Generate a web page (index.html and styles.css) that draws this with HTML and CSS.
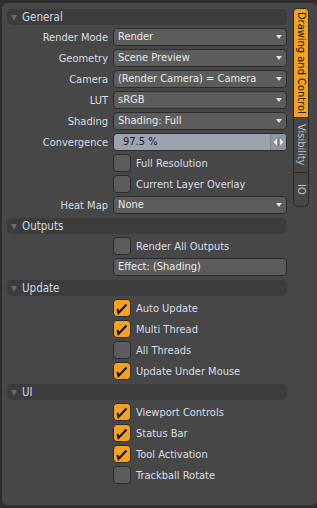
FILE: index.html
```html
<!DOCTYPE html>
<html lang="en">
<head>
  <meta charset="UTF-8">
  <title>Render Properties</title>
  <link rel="stylesheet" href="styles.css">
</head>
<body>
<div class="panel">
  <div class="form">
    <div class="head"><span class="tri"></span>General</div>
    <div class="row"><span class="label">Render Mode</span><div class="drop">Render</div></div>
    <div class="row"><span class="label">Geometry</span><div class="drop">Scene Preview</div></div>
    <div class="row"><span class="label">Camera</span><div class="drop">(Render Camera) = Camera</div></div>
    <div class="row"><span class="label">LUT</span><div class="drop">sRGB</div></div>
    <div class="row"><span class="label">Shading</span><div class="drop">Shading: Full</div></div>
    <div class="row"><span class="label">Convergence</span><div class="slider"><span class="val">97.5 %</span><span class="grip"><svg viewBox="0 0 15 16"><path d="M6 4.5 L2.5 8 L6 11.5 Z M9 4.5 L12.5 8 L9 11.5 Z"/><line x1="7.5" y1="3.5" x2="7.5" y2="12.5"/></svg></span></div></div>
    <div class="row"><span></span><div class="check"><span class="box"></span>Full Resolution</div></div>
    <div class="row"><span></span><div class="check"><span class="box"></span>Current Layer Overlay</div></div>
    <div class="row"><span class="label">Heat Map</span><div class="drop">None</div></div>

    <div class="head"><span class="tri"></span>Outputs</div>
    <div class="row"><span></span><div class="check"><span class="box"></span>Render All Outputs</div></div>
    <div class="row"><span></span><div class="field">Effect: (Shading)</div></div>

    <div class="head"><span class="tri"></span>Update</div>
    <div class="row"><span></span><div class="check"><span class="box on"><svg viewBox="0 0 16 16"><polyline points="3.5,9 4.5,13 12.5,4.5"/></svg></span>Auto Update</div></div>
    <div class="row"><span></span><div class="check"><span class="box on"><svg viewBox="0 0 16 16"><polyline points="3.5,9 4.5,13 12.5,4.5"/></svg></span>Multi Thread</div></div>
    <div class="row"><span></span><div class="check"><span class="box"></span>All Threads</div></div>
    <div class="row"><span></span><div class="check"><span class="box on"><svg viewBox="0 0 16 16"><polyline points="3.5,9 4.5,13 12.5,4.5"/></svg></span>Update Under Mouse</div></div>

    <div class="head"><span class="tri"></span>UI</div>
    <div class="row"><span></span><div class="check"><span class="box on"><svg viewBox="0 0 16 16"><polyline points="3.5,9 4.5,13 12.5,4.5"/></svg></span>Viewport Controls</div></div>
    <div class="row"><span></span><div class="check"><span class="box on"><svg viewBox="0 0 16 16"><polyline points="3.5,9 4.5,13 12.5,4.5"/></svg></span>Status Bar</div></div>
    <div class="row"><span></span><div class="check"><span class="box on"><svg viewBox="0 0 16 16"><polyline points="3.5,9 4.5,13 12.5,4.5"/></svg></span>Tool Activation</div></div>
    <div class="row"><span></span><div class="check"><span class="box"></span>Trackball Rotate</div></div>
  </div>

  <div class="tabs">
    <div class="tab active">Drawing and Control</div>
    <div class="rest">
      <div class="tab">Visibility</div>
      <div class="tab">IO</div>
    </div>
  </div>
</div>
</body>
</html>
```

FILE: styles.css
```css
body {
  margin: 0;
  background: #2e2e2e;
  font-family: "DejaVu Sans Condensed", "Liberation Sans", Arial, sans-serif;
  font-size: 11px;
  color: #d8dee6;
}
.panel {
  display: flex;
  margin: 3px 0 0 2px;
  width: 315px;
  height: 502px;
  background: #474747;
  border-radius: 5px;
  box-sizing: border-box;
  padding: 5px 8px 0 5px;
}
.form {
  display: flex;
  flex-direction: column;
  width: 281px;
}
.head {
  display: flex;
  align-items: center;
  height: 16px;
  margin: 1px 0 3px;
  background: #3c3c3c;
  border-radius: 5px;
  color: #cfd8e4;
  font-size: 11.5px;
}
.tri {
  width: 0;
  height: 0;
  margin: 1px 5px 0 4px;
  border-left: 3.5px solid transparent;
  border-right: 3.5px solid transparent;
  border-top: 6px solid #6a6a6a;
}
.row {
  display: grid;
  grid-template-columns: 101px 174px;
  column-gap: 5px;
  height: 18px;
  margin-bottom: 3px;
  align-items: center;
}
.label {
  text-align: right;
}
.drop, .field, .slider {
  height: 18px;
  box-sizing: border-box;
  border: 1px solid #2c2c2c;
  border-radius: 4px;
  background: #5c5c5c;
  color: #e8e8e8;
  padding-left: 4px;
  line-height: 16px;
  white-space: nowrap;
  overflow: hidden;
}
.drop {
  position: relative;
}
.drop::after {
  content: "";
  position: absolute;
  right: 4px;
  top: 6px;
  border-left: 3.5px solid transparent;
  border-right: 3.5px solid transparent;
  border-top: 4px solid #e4e4e4;
}
.slider {
  display: flex;
  padding-left: 0;
  background: #9ba4ae;
  color: #1c1c1c;
}
.slider .val {
  flex: 1;
  padding-left: 9px;
}
.slider .grip {
  width: 15px;
  border-left: 1px solid #7d858e;
  background: #8d959f;
}
.grip svg {
  display: block;
  width: 15px;
  height: 16px;
}
.grip path {
  fill: #eef0f2;
}
.grip line {
  stroke: #6f767e;
  stroke-width: 1;
}
.check {
  display: flex;
  align-items: center;
  gap: 5px;
}
.box {
  width: 18px;
  height: 18px;
  box-sizing: border-box;
  border: 1px solid #2c2c2c;
  border-radius: 4px;
  background: #5c5c5c;
}
.box.on {
  background: #f4a21f;
}
.box svg {
  display: block;
  width: 16px;
  height: 16px;
}
.box polyline {
  fill: none;
  stroke: #111;
  stroke-width: 2;
}
.tabs {
  display: flex;
  flex-direction: column;
  width: 16px;
  margin: 0 0 0 6px;
}
.tab {
  writing-mode: vertical-rl;
  font-size: 11px;
  color: #b9c5d2;
  display: flex;
  align-items: center;
  justify-content: center;
  width: 14px;
}
.tab.active {
  width: 16px;
  height: 110px;
  box-sizing: border-box;
  background: #f5a21e;
  color: #111;
  border: 1px solid #2c2c2c;
  border-radius: 4px 4px 0 0;
}
.rest {
  border: 1px solid #2c2c2c;
  border-top: none;
  border-radius: 0 0 5px 5px;
}
.rest .tab {
  height: 54px;
}
.rest .tab + .tab {
  height: 33px;
  border-top: 1px solid #2c2c2c;
}
```
